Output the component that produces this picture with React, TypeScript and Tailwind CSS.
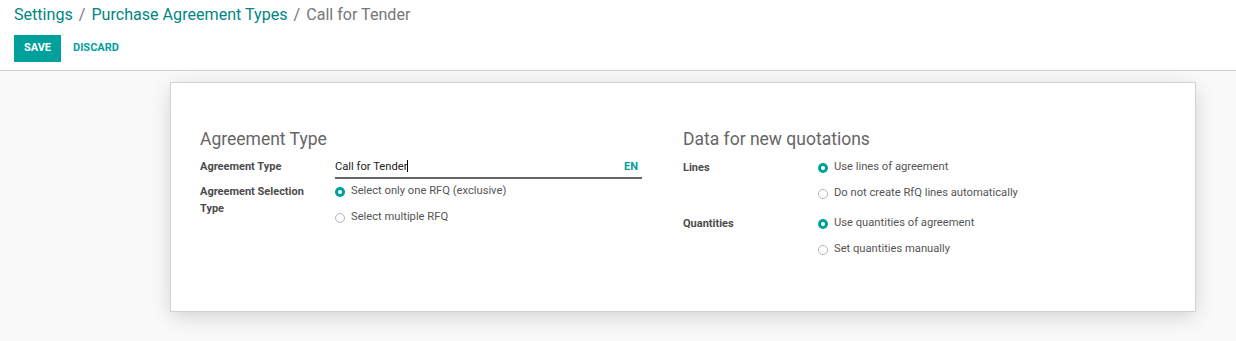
import React from "react";

const FONT = { fontFamily: "Roboto, 'Noto Sans', sans-serif" };

function Radio({ checked, label }: { checked?: boolean; label: string }) {
  return (
    <div className="flex items-center h-[15px]">
      {checked ? (
        <span className="w-[10px] h-[10px] rounded-full bg-[#00a09d] flex items-center justify-center shrink-0">
          <span className="w-[4px] h-[4px] rounded-full bg-white" />
        </span>
      ) : (
        <span className="w-[10px] h-[10px] rounded-full border border-[#b5b5b5] bg-white shrink-0" />
      )}
      <span className="ml-[6px] text-[11.2px] text-[#555]">{label}</span>
    </div>
  );
}

function Label({ children }: { children: React.ReactNode }) {
  return <div className="text-[11px] font-bold text-[#4c4c4c] leading-[17px]">{children}</div>;
}

export default function App() {
  return (
    <div style={FONT} className="w-[1236px] h-[341px] bg-[#f9f9f9] overflow-hidden">
      {/* control panel */}
      <div className="bg-white h-[71px] border-b border-[#d0d0d0] px-[14px]">
        <div className="pt-[5px] text-[16.1px] leading-[20px] text-[#008784] flex gap-[6px]">
          <span>Settings</span>
          <span className="text-[#777]">/</span>
          <span>Purchase Agreement Types</span>
          <span className="text-[#777]">/</span>
          <span className="text-[#777]">Call for Tender</span>
        </div>
        <div className="mt-[10px] flex items-center">
          <button className="h-[27px] w-[47px] bg-[#00a09d] text-white text-[11px] font-bold uppercase">
            Save
          </button>
          <button className="ml-[12px] text-[#00a09d] text-[11px] font-bold uppercase">Discard</button>
        </div>
      </div>

      {/* sheet */}
      <div className="mt-[11px] ml-[170px] w-[1026px] h-[230px] bg-white border border-[#cfd2d8] shadow-[0_5px_20px_-2px_rgba(0,0,0,0.18)] pl-[29px] pr-[29px] pt-[45px]">
        <div className="grid grid-cols-[483px_483px]">
          {/* left group */}
          <div className="w-[442px]">
            <div className="text-[17.5px] leading-[22px] text-[#666]">Agreement Type</div>
            <div className="flex mt-[7px]">
              <div className="w-[135px] shrink-0 pt-[1px]">
                <Label>Agreement Type</Label>
              </div>
              <div className="flex-1 border-b-2 border-[#666] h-[22px] flex justify-between items-start pt-[1px]">
                <span className="text-[11.2px] text-[#222] leading-[17px]">
                  Call for Tender<span className="inline-block w-px h-[12px] bg-black align-[-2px]" />
                </span>
                <span className="text-[11px] font-bold text-[#00a09d] leading-[17px] pr-[4px]">EN</span>
              </div>
            </div>
            <div className="flex mt-[4px]">
              <div className="w-[135px] shrink-0 pr-[20px]">
                <Label>Agreement Selection Type</Label>
              </div>
              <div className="flex flex-col gap-[11px] pt-[1px]">
                <Radio checked label="Select only one RFQ (exclusive)" />
                <Radio label="Select multiple RFQ" />
              </div>
            </div>
          </div>

          {/* right group */}
          <div>
            <div className="text-[17.5px] leading-[22px] text-[#666]">Data for new quotations</div>
            <div className="flex mt-[9px]">
              <div className="w-[135px] shrink-0">
                <Label>Lines</Label>
              </div>
              <div className="flex flex-col gap-[11px] pt-[1px]">
                <Radio checked label="Use lines of agreement" />
                <Radio label="Do not create RfQ lines automatically" />
              </div>
            </div>
            <div className="flex mt-[14px]">
              <div className="w-[135px] shrink-0">
                <Label>Quantities</Label>
              </div>
              <div className="flex flex-col gap-[11px] pt-[1px]">
                <Radio checked label="Use quantities of agreement" />
                <Radio label="Set quantities manually" />
              </div>
            </div>
          </div>
        </div>
      </div>
    </div>
  );
}
